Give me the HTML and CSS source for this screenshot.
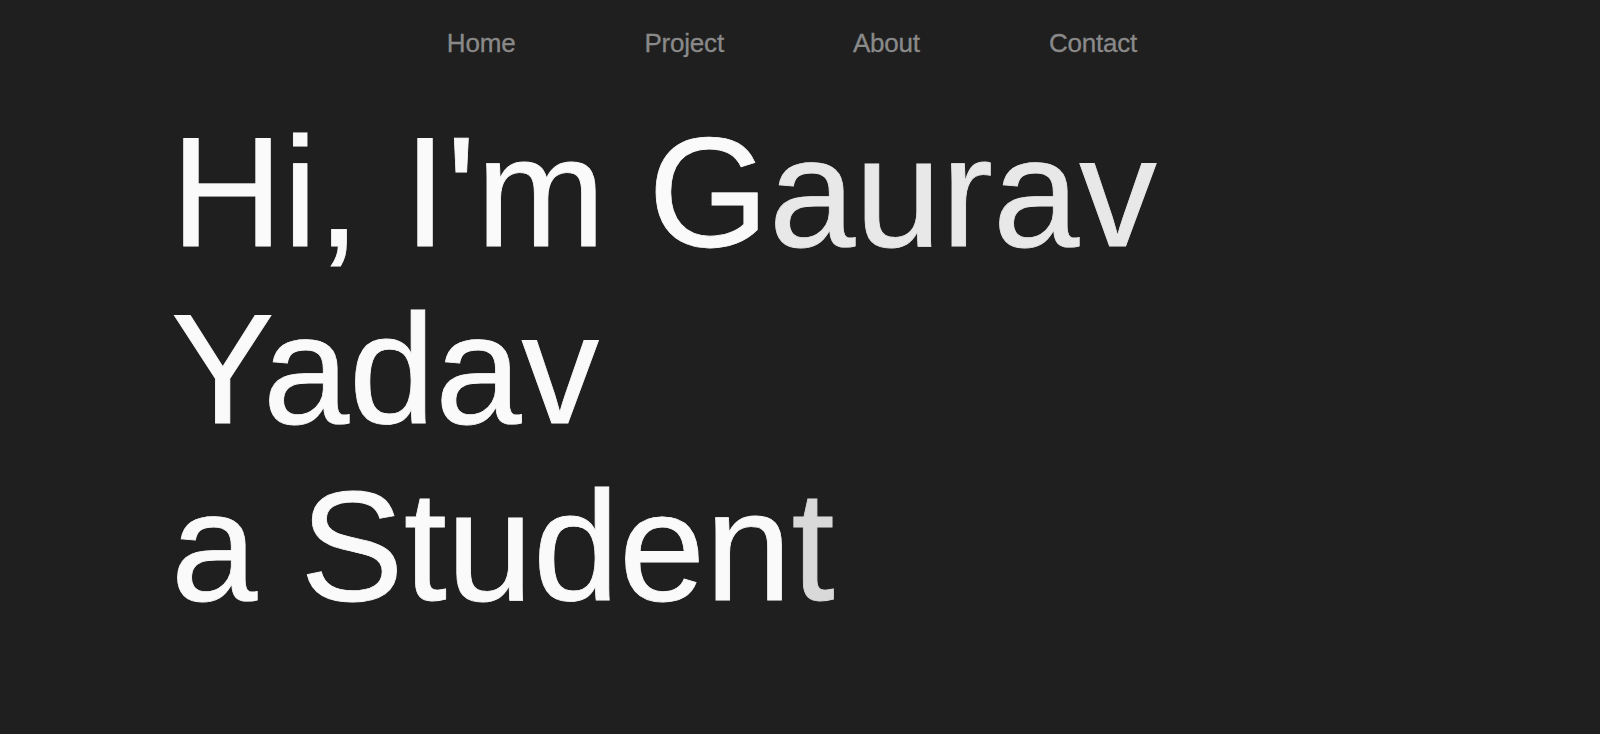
FILE: index.html
```html
<!DOCTYPE html>
<html lang="en">
<head>
<meta charset="utf-8">
<title>Gaurav Yadav</title>
<link rel="stylesheet" href="styles.css">
</head>
<body>
<header class="topbar">
  <nav class="nav">
    <a class="nav-link" href="#home">Home</a>
    <a class="nav-link" href="#project">Project</a>
    <a class="nav-link" href="#about">About</a>
    <a class="nav-link" href="#contact">Contact</a>
  </nav>
</header>
<main class="hero">
  <h1 class="hero-title">Hi, I'm G<span class="shade">aurav</span><br>Yadav<br>a Studen<span class="shade-t">t</span></h1>
</main>
</body>
</html>
```
FILE: styles.css
```css
html, body {
  margin: 0;
  padding: 0;
  background: #1f1f1f;
  height: 100%;
}
body {
  font-family: "Liberation Sans", Arial, sans-serif;
  color: #fafafa;
  overflow: hidden;
}
.topbar {
  display: flex;
  justify-content: center;
  padding: 25px 16px 0 0;
}
.nav {
  display: flex;
  gap: 129px;
}
.nav-link {
  color: #8a8a8a;
  text-decoration: none;
  font-size: 26px;
  line-height: 36px;
  letter-spacing: -0.2px;
  -webkit-text-stroke: 0.3px #8a8a8a;
}
.hero {
  padding: 43px 0 0 171px;
}
.hero-title {
  margin: 0;
  font-weight: 400;
  font-size: 155px;
  line-height: 177px;
  color: #fafafa;
  -webkit-text-stroke: 0.8px #fafafa;
}
.shade {
  color: #e8e8e8;
  -webkit-text-stroke-color: #e8e8e8;
}
.shade-t {
  color: #d9d9d9;
  -webkit-text-stroke-color: #d9d9d9;
}
```
